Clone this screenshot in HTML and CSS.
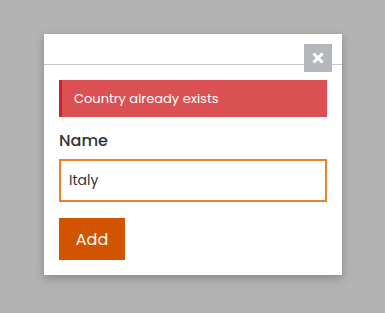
FILE: index.html
```html
<!DOCTYPE html>
<html>
<head>
<meta charset="utf-8">
<link rel="stylesheet" href="styles.css">
</head>
<body>
<div class="modal">
  <div class="modal-header">
    <button class="close" aria-label="Close">
      <svg width="12" height="12" viewBox="0 0 12 12"><path d="M1.5 1.5 L10.5 10.5 M10.5 1.5 L1.5 10.5" stroke="#fff" stroke-width="3" stroke-linecap="butt"/></svg>
    </button>
  </div>
  <div class="modal-body">
    <div class="alert">Country already exists</div>
    <label class="label" for="name">Name</label>
    <input id="name" class="input" type="text" value="Italy">
    <button class="btn">Add</button>
  </div>
</div>
</body>
</html>
```
FILE: styles.css
```css
html, body {
  margin: 0;
  padding: 0;
}
body {
  background: #b3b3b3;
  width: 385px;
  height: 313px;
  font-family: "Poppins", "Inter", "Noto Sans", sans-serif;
  padding-top: 34px;
  padding-left: 44px;
  box-sizing: border-box;
}
.modal {
  width: 298px;
  height: 241px;
  background: #fff;
  position: relative;
  box-shadow: 0 3px 9px rgba(0,0,0,0.25);
}
.modal-header {
  height: 30px;
  border-bottom: 1px solid #c8c8c8;
}
.close {
  position: absolute;
  top: 10px;
  right: 10px;
  width: 28px;
  height: 28px;
  border: 0;
  padding: 0;
  background: #b4b8bd;
  display: flex;
  align-items: center;
  justify-content: center;
}
.modal-body {
  padding: 15px;
  display: flex;
  flex-direction: column;
  align-items: flex-start;
}
.alert {
  box-sizing: border-box;
  width: 268px;
  height: 37px;
  background: #db5153;
  border-left: 3px solid #c8262a;
  color: #fff;
  font-size: 13px;
  padding-left: 12px;
  display: flex;
  align-items: center;
}
.label {
  margin-top: 13px;
  font-size: 16px;
  font-weight: 500;
  color: #333;
  line-height: 22px;
}
.input {
  margin-top: 7px;
  box-sizing: border-box;
  width: 268px;
  height: 43px;
  border: 2px solid #e8832c;
  padding: 0 8px;
  font-family: inherit;
  font-size: 14px;
  color: #333;
  outline: none;
}
.btn {
  margin-top: 16px;
  width: 66px;
  height: 42px;
  border: 0;
  background: #d35400;
  color: #fff;
  font-family: inherit;
  font-size: 16px;
  font-weight: 400;
  padding: 0;
}
```
